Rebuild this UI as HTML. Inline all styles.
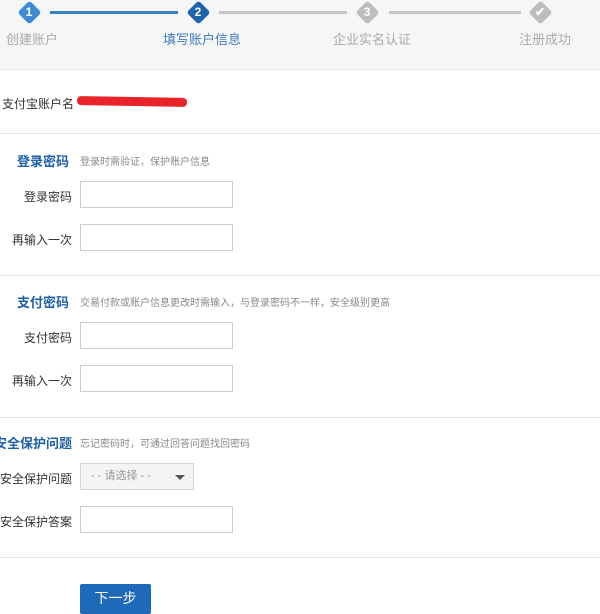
<!DOCTYPE html>
<html><head><meta charset="utf-8"><style>
*{margin:0;padding:0;box-sizing:border-box}
body{width:600px;height:597px;overflow:hidden;background:#fff;font-family:"Liberation Sans","Noto Sans CJK SC",sans-serif;font-size:12px;color:#333;position:relative}
.hd{position:absolute;left:0;top:0;width:600px;height:70px;background:#f6f6f6;border-bottom:1px solid #e6e6e6}
.dm{position:absolute;width:17px;height:17px;transform:rotate(45deg);border-radius:3px}
.num{position:absolute;width:24px;text-align:center;color:#fff;font-weight:bold;font-size:12px;line-height:24px}
.ln{position:absolute;height:3px;top:11px}
.lb{position:absolute;top:29px;font-size:13px;color:#aaa}
.a{position:absolute}
.sep{position:absolute;left:0;width:600px;height:1px;background:#e8e8e8}
.tt{position:absolute;font-size:13px;font-weight:bold;color:#1e5fa8}
.ds{position:absolute;font-size:10px;color:#888}
.fl{position:absolute;width:72px;text-align:right;font-size:12px;color:#333}
.in{position:absolute;left:80px;width:153px;height:27px;border:1px solid #ccc;background:#fff}
</style></head><body>
<div class="hd">
<div class="ln" style="left:50px;width:128px;background:#3a82c8"></div>
<div class="ln" style="left:219px;width:128px;background:#c4c4c4"></div>
<div class="ln" style="left:389px;width:132px;background:#c4c4c4"></div>
<div class="dm" style="left:21px;top:4px;background:#3d8ad6"></div><div class="num" style="left:17px;top:0">1</div>
<div class="dm" style="left:190px;top:4px;background:#1d64ad"></div><div class="num" style="left:186px;top:0">2</div>
<div class="dm" style="left:359px;top:4px;background:#bdbdbd"></div><div class="num" style="left:355px;top:0">3</div>
<div class="dm" style="left:532px;top:4px;background:#bdbdbd"></div><div class="num" style="left:528px;top:0">✔</div>
<div class="lb" style="left:6px">创建账户</div>
<div class="lb" style="left:163px;color:#3a7bbf">填写账户信息</div>
<div class="lb" style="left:333px">企业实名认证</div>
<div class="lb" style="left:519px">注册成功</div>
</div>
<div class="a" style="left:2px;top:95px">支付宝账户名</div>
<div class="a" style="left:77px;top:97px;width:110px;height:9px;background:#e8232a;border-radius:4px;transform:rotate(1deg)"></div>
<div class="sep" style="top:133px"></div>
<div class="tt" style="left:17px;top:151px">登录密码</div><div class="ds" style="left:80px;top:153px">登录时需验证，保护账户信息</div>
<div class="fl" style="left:0;top:188px">登录密码</div><div class="in" style="top:181px"></div>
<div class="fl" style="left:0;top:231px">再输入一次</div><div class="in" style="top:224px"></div>
<div class="sep" style="top:275px"></div>
<div class="tt" style="left:17px;top:292px">支付密码</div><div class="ds" style="left:80px;top:294px">交易付款或账户信息更改时需输入，与登录密码不一样，安全级别更高</div>
<div class="fl" style="left:0;top:329px">支付密码</div><div class="in" style="top:322px"></div>
<div class="fl" style="left:0;top:372px">再输入一次</div><div class="in" style="top:365px"></div>
<div class="sep" style="top:417px"></div>
<div class="tt" style="left:-6px;top:433px">安全保护问题</div><div class="ds" style="left:80px;top:435px">忘记密码时，可通过回答问题找回密码</div>
<div class="fl" style="left:0;top:470px">安全保护问题</div>
<div class="a" style="left:80px;top:463px;width:114px;height:27px;border:1px solid #d4d4d4;background:#f4f4f4;color:#999;font-size:11px;line-height:25px;padding-left:10px">- - 请选择 - -<span style="position:absolute;right:8px;top:11px;border-left:5px solid transparent;border-right:5px solid transparent;border-top:5px solid #555"></span></div>
<div class="fl" style="left:0;top:513px">安全保护答案</div><div class="in" style="top:506px"></div>
<div class="sep" style="top:557px"></div>
<div class="a" style="left:80px;top:584px;width:71px;height:30px;background:#1e6ab8;border-radius:2px;color:#fff;font-size:14px;text-align:center;line-height:28px">下一步</div>
</body></html>
